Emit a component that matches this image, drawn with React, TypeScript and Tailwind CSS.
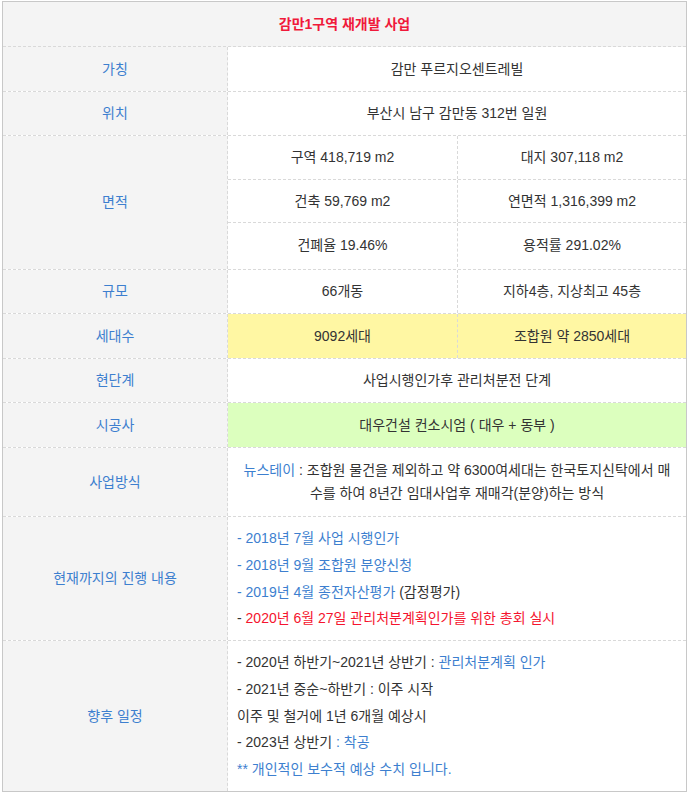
const font = {
  fontFamily: '"Liberation Sans", "Noto Sans CJK KR", "Noto Sans", sans-serif',
};

const Label = ({ children, h }: { children: React.ReactNode; h: string }) => (
  <div
    className={`w-[225px] shrink-0 ${h} bg-[#f4f4f4] border-r border-dashed border-[#d9d9d9] flex items-center justify-center text-[#3d7fcf]`}
  >
    {children}
  </div>
);

const Row = ({ children, last }: { children: React.ReactNode; last?: boolean }) => (
  <div className={`flex ${last ? "" : "border-b border-dashed border-[#d9d9d9]"}`}>{children}</div>
);

export default function App() {
  return (
    <div className="bg-white w-[690px] h-[798px] pt-[1px] pl-[2px]" style={font}>
      <div className="w-[685px] border border-[#c8c8c8] text-[#333] text-[14px]">
        {/* Title */}
        <div className="h-[45px] bg-[#f4f4f4] border-b border-dashed border-[#d9d9d9] flex items-center justify-center font-bold text-[#f0193a]">
          감만1구역 재개발 사업
        </div>

        <Row>
          <Label h="h-[44px]">가칭</Label>
          <div className="flex-1 flex items-center justify-center">감만 푸르지오센트레빌</div>
        </Row>

        <Row>
          <Label h="h-[43px]">위치</Label>
          <div className="flex-1 flex items-center justify-center">부산시 남구 감만동 312번 일원</div>
        </Row>

        <Row>
          <Label h="h-[133px]">면적</Label>
          <div className="flex-1 flex flex-col">
            <div className="flex h-[44px] border-b border-dashed border-[#d9d9d9]">
              <div className="w-[230px] border-r border-dashed border-[#d9d9d9] flex items-center justify-center">구역 418,719 m2</div>
              <div className="flex-1 flex items-center justify-center">대지 307,118 m2</div>
            </div>
            <div className="flex h-[43px] border-b border-dashed border-[#d9d9d9]">
              <div className="w-[230px] border-r border-dashed border-[#d9d9d9] flex items-center justify-center">건축 59,769 m2</div>
              <div className="flex-1 flex items-center justify-center">연면적 1,316,399 m2</div>
            </div>
            <div className="flex h-[44px]">
              <div className="w-[230px] border-r border-dashed border-[#d9d9d9] flex items-center justify-center">건폐율 19.46%</div>
              <div className="flex-1 flex items-center justify-center">용적률 291.02%</div>
            </div>
          </div>
        </Row>

        <Row>
          <Label h="h-[43px]">규모</Label>
          <div className="w-[230px] border-r border-dashed border-[#d9d9d9] flex items-center justify-center">66개동</div>
          <div className="flex-1 flex items-center justify-center">지하4층, 지상최고 45층</div>
        </Row>

        <Row>
          <Label h="h-[44px]">세대수</Label>
          <div className="w-[230px] bg-[#fff7a3] border-r border-dashed border-[#d9d9d9] flex items-center justify-center">9092세대</div>
          <div className="flex-1 bg-[#fff7a3] flex items-center justify-center">조합원 약 2850세대</div>
        </Row>

        <Row>
          <Label h="h-[43px]">현단계</Label>
          <div className="flex-1 flex items-center justify-center">사업시행인가후 관리처분전 단계</div>
        </Row>

        <Row>
          <Label h="h-[44px]">시공사</Label>
          <div className="flex-1 bg-[#dcffbe] flex items-center justify-center">대우건설 컨소시엄 ( 대우 + 동부 )</div>
        </Row>

        <Row>
          <Label h="h-[68px]">사업방식</Label>
          <div className="flex-1 flex items-center justify-center text-center leading-[23px]">
            <p>
              <span className="text-[#3d7fcf]">뉴스테이</span> : 조합원 물건을 제외하고 약 6300여세대는 한국토지신탁에서 매
              <br />
              수를 하여 8년간 임대사업후 재매각(분양)하는 방식
            </p>
          </div>
        </Row>

        <Row>
          <Label h="h-[123px]">현재까지의 진행 내용</Label>
          <div className="flex-1 flex flex-col justify-center pl-[9px] leading-[26.7px] text-[#3d7fcf]">
            <div>- 2018년 7월 사업 시행인가</div>
            <div>- 2018년 9월 조합원 분양신청</div>
            <div>
              - 2019년 4월 종전자산평가 <span className="text-[#333]">(감정평가)</span>
            </div>
            <div>
              <span className="text-[#333]">-</span> <span className="text-[#f5142e]">2020년 6월 27일 관리처분계획인가를 위한 총회 실시</span>
            </div>
          </div>
        </Row>

        <Row last>
          <Label h="h-[150px]">향후 일정</Label>
          <div className="flex-1 flex flex-col justify-center pl-[9px] leading-[26.8px]">
            <div>
              - 2020년 하반기~2021년 상반기 : <span className="text-[#3d7fcf]">관리처분계획 인가</span>
            </div>
            <div>- 2021년 중순~하반기 : 이주 시작</div>
            <div>이주 및 철거에 1년 6개월 예상시</div>
            <div>
              - 2023년 상반기 <span className="text-[#3d7fcf]">: 착공</span>
            </div>
            <div className="text-[#3d7fcf]">** 개인적인 보수적 예상 수치 입니다.</div>
          </div>
        </Row>
      </div>
    </div>
  );
}
